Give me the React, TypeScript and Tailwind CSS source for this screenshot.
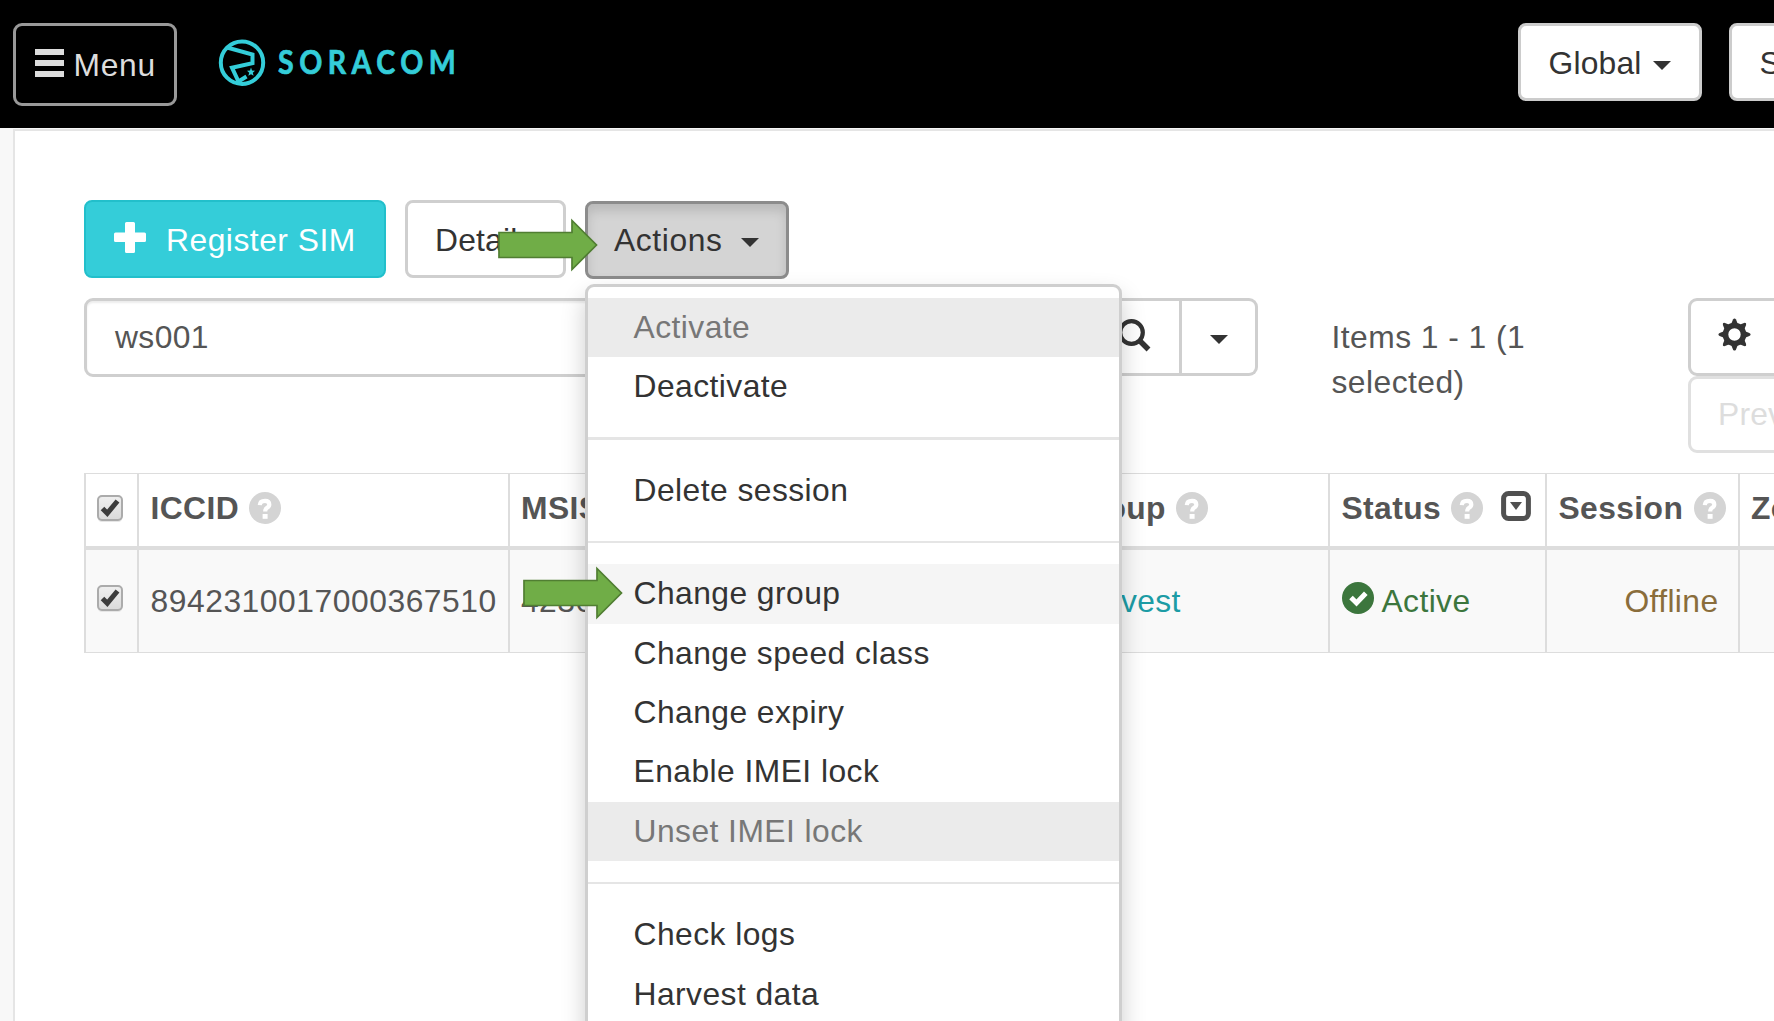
import React from 'react';

const Caret = ({ className = '' }: { className?: string }) => (
  <svg className={`h-[9px] w-[18px] shrink-0 ${className}`} viewBox="0 0 18 9" fill="#333">
    <path d="M0 0H18L9 9Z" />
  </svg>
);

const Help = () => (
  <svg className="mt-[-1px] h-8 w-8 shrink-0" viewBox="0 0 32 32">
    <circle cx="16" cy="16" r="16" fill="#d4d4d4" />
    <path d="M10.800 13.200Q11 8.800 16 8.800Q20.300 8.800 20.300 12.400Q20.300 14.400 18.200 15.600Q16.200 16.600 16.200 19.600" fill="none" stroke="#fff" strokeWidth="4.200" />
    <rect x="13.600" y="22" width="5" height="4.800" fill="#fff" />
  </svg>
);

const Check = () => (
  <svg className="ml-[-1px] h-[28px] w-[26px] shrink-0" viewBox="0 0 26 28">
    <defs>
      <linearGradient id="box" x1="0" y1="0" x2="0" y2="1">
        <stop offset="0" stopColor="#efefef" />
        <stop offset="1" stopColor="#dadada" />
      </linearGradient>
    </defs>
    <rect x="1" y="3" width="24" height="24" rx="4" fill="#e6e6e6" />
    <rect x="1" y="1" width="24" height="24" rx="4" fill="url(#box)" stroke="#ababab" strokeWidth="2" />
    <path d="M5.500 13.500L10.300 18.300L20.500 6" fill="none" stroke="#3c3c3c" strokeWidth="5" />
  </svg>
);

const Filter = () => (
  <svg className="mt-[-5px] h-[30px] w-[30px] shrink-0" viewBox="0 0 30 30">
    <rect x="2.600" y="2.600" width="24.800" height="24.800" rx="5" fill="none" stroke="#505050" strokeWidth="5" />
    <path d="M9 11H21L15 19Z" fill="#505050" />
  </svg>
);

const Arrow = ({ className }: { className: string }) => (
  <svg className={`absolute z-30 h-[54px] w-[101px] ${className}`} viewBox="0 0 101 54">
    <path d="M1 14.500H74V2.500L98.500 27L74 51.500V39.500H1Z" fill="#70ad47" stroke="#507e32" strokeWidth="1.700" />
  </svg>
);

const Logo = () => (
  <div className="ml-[41px] mt-[38px] flex h-[48px] items-center text-[#34cdd9]">
    <svg className="h-[48px] w-[48px]" viewBox="0 0 48 48" fill="none" stroke="currentColor">
      <circle cx="24" cy="24.700" r="21.200" strokeWidth="4" />
      <path d="M9 9.500L34.500 16.500V25.200L14 29.700L20.500 43.500L28.500 38.500" strokeWidth="4" />
      <path d="M33 29.500L34 32.500L37 32.700L34.800 34.700L35.600 37.800L33 36.200L30.300 37.800L31.200 34.700L29 32.700L32 32.500Z" fill="currentColor" stroke="none" />
    </svg>
    <span className="ml-[12px] mt-px origin-left scale-x-[0.88] font-['Lato'] text-[32.500px] font-bold leading-none tracking-[6.200px] [-webkit-text-stroke:0.700px_#34cdd9]">SORACOM</span>
  </div>
);

const MenuItem = ({ children, disabled, active }: { children: string; disabled?: boolean; active?: boolean }) => (
  <li
    className={`h-[59.300px] pl-[45.500px] leading-[59.600px] tracking-[0.450px] ${
      disabled ? 'bg-[#ebebeb] text-[#777]' : active ? 'bg-[#f5f5f5] text-[#333]' : 'text-[#333]'
    }`}
  >
    {children}
  </li>
);

const Divider = () => <li className="mb-[21.200px] mt-[20.600px] h-[2.500px] bg-[#e5e5e5]" />;

const ActionsMenu = () => (
  <ul className="absolute left-0 top-[83px] z-20 w-[537px] rounded-[9px] border-[3px] border-[#cfcfcf] bg-white bg-clip-padding pb-4 pt-[11px] shadow-[0_12px_24px_rgba(0,0,0,0.2)]">
    <MenuItem disabled>Activate</MenuItem>
    <MenuItem>Deactivate</MenuItem>
    <Divider />
    <MenuItem>Delete session</MenuItem>
    <Divider />
    <MenuItem active>Change group</MenuItem>
    <MenuItem>Change speed class</MenuItem>
    <MenuItem>Change expiry</MenuItem>
    <MenuItem>Enable IMEI lock</MenuItem>
    <MenuItem disabled>Unset IMEI lock</MenuItem>
    <Divider />
    <MenuItem>Check logs</MenuItem>
    <MenuItem>Harvest data</MenuItem>
  </ul>
);

const Header = () => (
  <header className="flex h-[128px] items-start bg-black">
    <button className="ml-[12.500px] mt-[23px] flex h-[83px] w-[164px] shrink-0 items-center rounded-[9px] border-[3px] border-[#999] pl-[19px] text-[#ddd]">
      <svg className="mt-[-3px] h-[28px] w-[29px]" viewBox="0 0 29 28" fill="#ddd">
        <path d="M0 0H29V6H0ZM0 11H29V17H0ZM0 22H29V28H0Z" />
      </svg>
      <span className="ml-[10px] mt-[2px] tracking-[0.700px]">Menu</span>
    </button>
    <Logo />
    <div className="absolute right-0 top-0 flex w-[256.500px] gap-[27px] overflow-hidden pt-[23px]">
      <button className="flex h-[78px] w-[184px] shrink-0 items-center rounded-[8px] border-[3px] border-[#ccc] bg-white pl-[28px] pt-[4px] text-[#333]">
        Global
        <Caret className="ml-[11px] mt-[3px]" />
      </button>
      <button className="flex h-[78px] w-[184px] shrink-0 items-center rounded-[8px] border-[3px] border-[#ccc] bg-white pl-[28px] pt-[4px] text-[#333]">
        Support
      </button>
    </div>
  </header>
);

const cols = 'grid grid-cols-[53px_370.500px_547.500px_273px_217px_192.500px_200px]';
const th = 'flex h-[72px] items-center border-l-2 border-[#ddd] pl-[11.500px] pb-[3px] font-bold';
const td = 'flex h-[102px] items-center border-l-2 border-[#ddd] pl-[11.500px] pt-[2px]';

export default function App() {
  return (
    <div className="relative flex h-[1021px] w-[1774px] flex-col overflow-hidden bg-white font-['Liberation_Sans',sans-serif] text-[31.800px] leading-[45.300px] tracking-[0.200px] text-[#555]">
      <Header />
      <div className="flex flex-1 bg-[#f8f8f8]">
        <main className="ml-[13px] mt-px w-[1761px] shrink-0 border-l-[2.500px] border-t-[2.500px] border-[#e5e5e5] bg-white pl-[69px]">
          <div className="flex pt-[69px] text-[#333]">
            <button className="flex h-[78px] w-[302px] items-center rounded-[8px] border-[2.500px] border-[#22bfcb] bg-[#34cdd9] pl-[28px] text-white">
              <svg className="mt-[-3px] h-[31px] w-[32px]" viewBox="0 0 32 31" fill="#fff">
                <path d="M12.500 0H19.500Q21 0 21 1.500V10.500H30.500Q32 10.500 32 12V18.500Q32 20 30.500 20H21V29.500Q21 31 19.500 31H12.500Q11 31 11 29.500V20H1.500Q0 20 0 18.500V12Q0 10.500 1.500 10.500H11V1.500Q11 0 12.500 0Z" />
              </svg>
              <span className="ml-[20px] mt-[3px] tracking-[0.500px]">Register SIM</span>
            </button>
            <button className="ml-[19px] flex h-[78px] w-[161px] items-center rounded-[8px] border-[3px] border-[#cfcfcf] bg-white pl-[27px] pt-[3px]">Details</button>
            <div className="relative ml-[19px] mt-px">
              <button className="flex h-[78px] w-[204px] items-center rounded-[8px] border-[3px] border-[#8c8c8c] bg-[#d4d4d4] pl-[26px] pt-px shadow-[inset_0_7px_11px_rgba(0,0,0,0.125)]">
                <span className="tracking-[0.600px]">Actions</span>
                <Caret className="ml-[19px] mt-[4px]" />
              </button>
              <ActionsMenu />
            </div>
          </div>

          <div className="mt-[19px] flex h-[156px] items-start">
            <div className="flex h-[79px] w-[1000px] shrink-0 items-center rounded-l-[9px] border-[3px] border-[#cfcfcf] pl-[28px] tracking-[0.400px] shadow-[inset_0_2px_2px_rgba(0,0,0,0.075)]">ws001</div>
            <button className="flex h-[78px] w-[98px] shrink-0 items-center border-y-[3px] border-r-[3px] border-[#cfcfcf] bg-white pl-[34px]">
              <svg className="mt-[-4px] h-[33px] w-[33px]" viewBox="0 0 33 33" fill="none" stroke="#333">
                <circle cx="13.500" cy="13.500" r="11.300" strokeWidth="4.200" />
                <path d="M21.500 21.500L30.500 30.500" strokeWidth="5.500" />
              </svg>
            </button>
            <button className="flex h-[78px] w-[76px] shrink-0 items-center justify-center rounded-r-[9px] border-y-[3px] border-r-[3px] border-[#cfcfcf] bg-white">
              <Caret className="mt-[4px]" />
            </button>
            <p className="ml-[73.500px] mt-[17px] w-[230px] shrink-0 tracking-[0.450px]">Items 1 - 1 (1 selected)</p>
            <div className="ml-[126.500px] w-[200px] shrink-0">
              <button className="flex h-[78px] w-[200px] items-center rounded-[9px] border-[3px] border-[#cfcfcf] bg-white pl-[27px]">
                <svg className="mt-[-5px] h-[33px] w-[33px]" viewBox="0 0 33 33">
                  <circle cx="16.500" cy="16.500" r="9" fill="none" stroke="#333" strokeWidth="5.600" />
                  {[0, 45, 90, 135, 180, 225, 270, 315].map((a) => (
                    <path key={a} d="M13.200 6L15 1.600Q16.500 -0.800 18 1.600L19.800 6Z" fill="#333" transform={`rotate(${a} 16.500 16.500)`} />
                  ))}
                </svg>
              </button>
              <button className="flex h-[77px] w-[200px] items-center rounded-[9px] border-[3px] border-[#e0e0e0] bg-white pl-[27px] pt-px text-[#ddd]">Prev</button>
            </div>
          </div>

          <div className="mt-[19px] w-[1854px] border-y-[1.500px] border-[#ddd] tracking-[0.400px]">
            <div className={`${cols} border-b-4 border-[#ddd]`}>
              <div className={th}><Check /></div>
              <div className={th}>ICCID<span className="ml-[10px] flex"><Help /></span></div>
              <div className={th}>MSISDN</div>
              <div className={`${th} !border-l-0 gap-[10px] !pl-[13.500px]`}>Group<Help /></div>
              <div className={th}>Status<span className="ml-[10px] flex items-center gap-[18px]"><Help /><Filter /></span></div>
              <div className={`${th} gap-[10.500px]`}>Session<Help /></div>
              <div className={th}>Zone</div>
            </div>
            <div className={`${cols} bg-[#f9f9f9]`}>
              <div className={`${td} pb-[6px]`}><Check /></div>
              <div className={`${td} tracking-[0.540px]`}>8942310017000367510</div>
              <div className={td}>423663</div>
              <div className={`${td} !border-l-0 !pl-[13.500px] text-[#1c9ca5]`}>Harvest</div>
              <div className={`${td} text-[#3c763d]`}>
                <svg className="mr-[8px] mt-[-8px] h-[32px] w-[32px]" viewBox="0 0 32 32">
                  <circle cx="16" cy="16" r="16" fill="#3c763d" />
                  <path d="M9 15.500L14.500 21L23.800 11.200" fill="none" stroke="#fff" strokeWidth="5" />
                </svg>
                Active
              </div>
              <div className={`${td} justify-end pr-[19px] text-[#8a6d3b]`}>Offline</div>
              <div className={td} />
            </div>
          </div>
        </main>
      </div>
      <Arrow className="left-[498px] top-[218px]" />
      <Arrow className="left-[523px] top-[566px]" />
    </div>
  );
}
